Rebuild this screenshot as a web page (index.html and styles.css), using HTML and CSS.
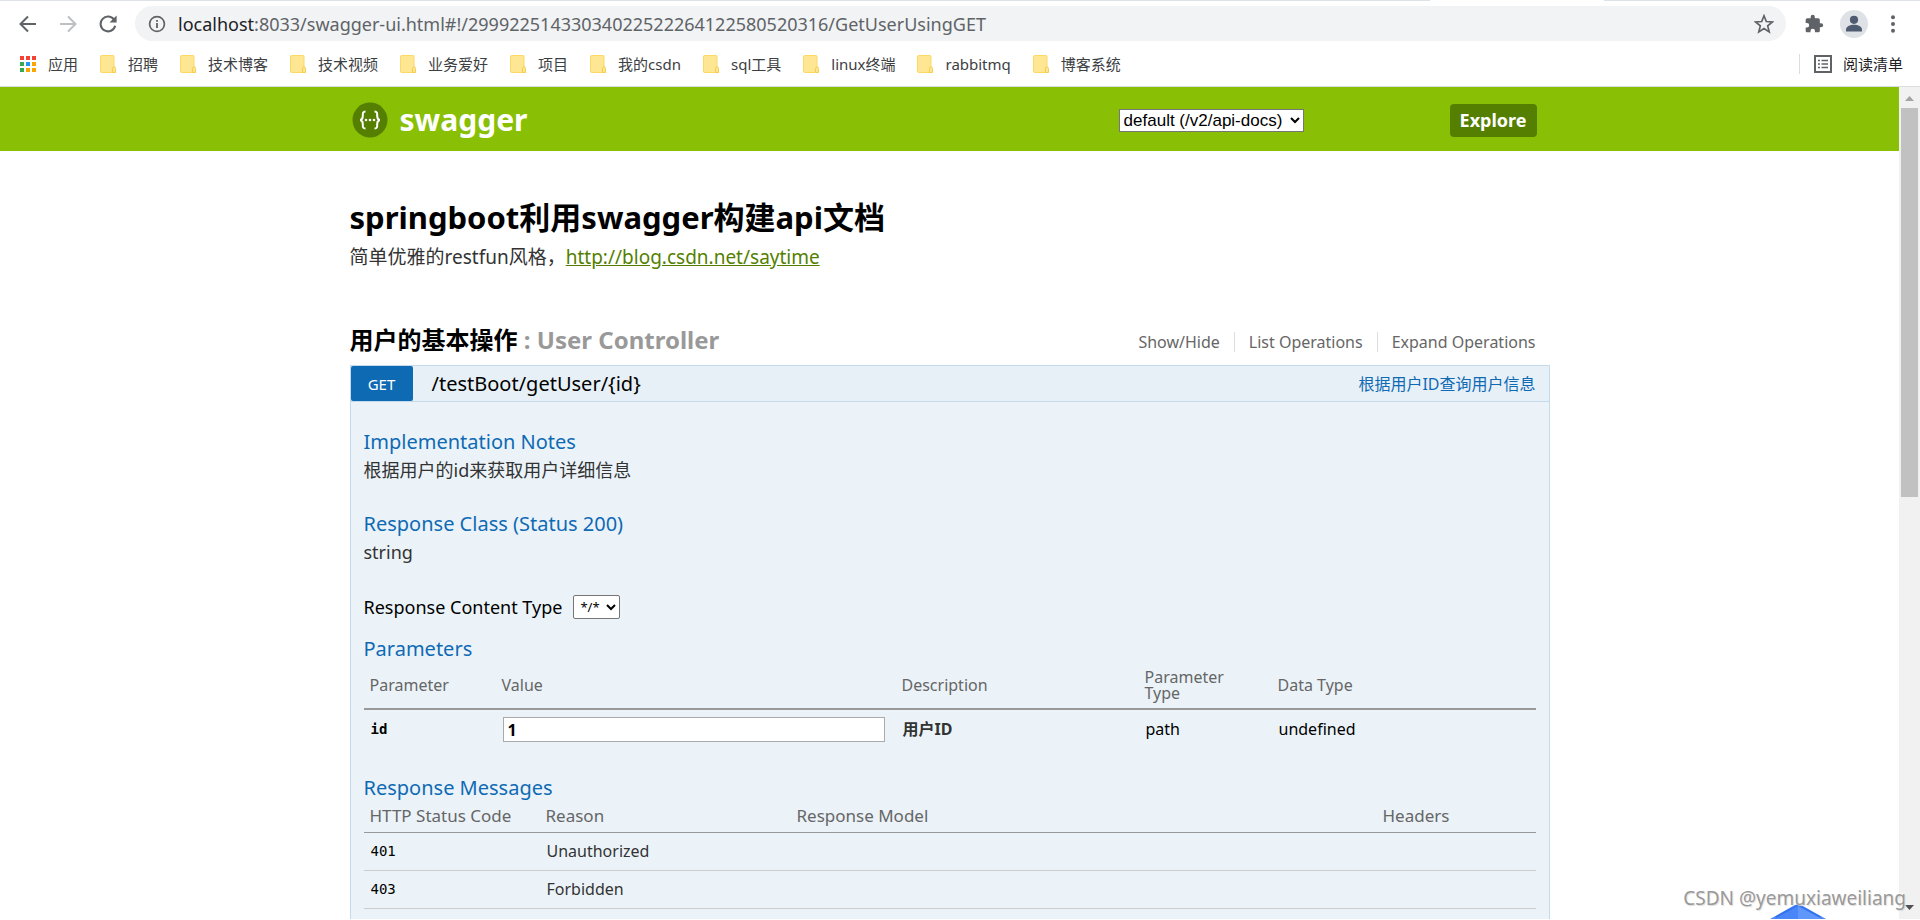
FILE: index.html
```html
<!DOCTYPE html>
<html lang="zh-CN">
<head>
<meta charset="utf-8">
<title>Swagger UI</title>
<link rel="stylesheet" href="styles.css">
</head>
<body>
<svg class="sprite" aria-hidden="true">
  <symbol id="folder" viewBox="0 0 16 18">
    <rect x="0.5" y="0.5" width="13.5" height="17" rx="1" fill="#ffe693" stroke="#fbd964"/>
    <path d="M12.500 17.500V13.500Q12.500 12 14 12Q15.500 12 15.500 13.500V17.500Z" fill="#ffe693" stroke="#f5cd50"/>
  </symbol>
</svg>
<div class="window">
  <div class="tabstrip"><span class="tab-rest tab-left"></span><span class="tab-rest tab-right"></span></div>
  <header class="toolbar">
    <button class="tool back" aria-label="后退"><svg viewBox="0 0 18 18"><path d="M17 9H2M9 1.500L1.500 9L9 16.500" fill="none" stroke="#5f6368" stroke-width="2"/></svg></button>
    <button class="tool forward" aria-label="前进"><svg viewBox="0 0 18 18"><path d="M1 9H16M9 1.500L16.500 9L9 16.500" fill="none" stroke="#bdc0c3" stroke-width="2"/></svg></button>
    <button class="tool reload" aria-label="重新加载"><svg viewBox="0 0 18 18"><path d="M15.300 5A7.400 7.400 0 1 0 16.200 10.800" fill="none" stroke="#5f6368" stroke-width="2.100"/><path d="M17.600 0.500V7.600H10.500Z" fill="#5f6368"/></svg></button>
    <div class="address">
      <svg class="info" viewBox="0 0 18 18"><circle cx="9" cy="9" r="7.400" fill="none" stroke="#5f6368" stroke-width="1.700"/><path d="M9 8v5M9 5v1.800" stroke="#5f6368" stroke-width="1.800"/></svg>
      <div class="url"><span class="host">localhost</span>:8033/swagger-ui.html#!/29992251433034022522264122580520316/GetUserUsingGET</div>
      <button class="star" aria-label="收藏"><svg viewBox="0 0 20 20"><path d="M10 1.800L12.300 7.500L18.400 7.900L13.700 11.900L15.200 17.900L10 14.600L4.800 17.900L6.300 11.900L1.600 7.900L7.700 7.500Z" fill="none" stroke="#5f6368" stroke-width="1.700"/></svg></button>
    </div>
    <button class="ext" aria-label="扩展程序"><svg viewBox="0 0 24 24"><path d="M20.500 11H19V7c0-1.100-.9-2-2-2h-4V3.500a2.500 2.500 0 0 0-5 0V5H4c-1.100 0-2 .9-2 2v3.800h1.500a2.700 2.700 0 0 1 0 5.400H2V20c0 1.100.9 2 2 2h3.800v-1.500a2.700 2.700 0 0 1 5.400 0V22H17c1.100 0 2-.9 2-2v-4h1.500a2.500 2.500 0 0 0 0-5z" fill="#5f6368"/></svg></button>
    <button class="profile" aria-label="用户"><svg viewBox="0 0 28 28"><circle cx="14" cy="14" r="14" fill="#dee1e6"/><circle cx="14" cy="9.800" r="4.100" fill="#4f5b70"/><path d="M6 21.500V19.500C6 16.500 10 14.800 14 14.800S22 16.500 22 19.500V21.500Z" fill="#4f5b70"/></svg></button>
    <button class="menu" aria-label="菜单"><svg viewBox="0 0 4 18"><circle cx="2" cy="2.200" r="2" fill="#5f6368"/><circle cx="2" cy="9" r="2" fill="#5f6368"/><circle cx="2" cy="15.800" r="2" fill="#5f6368"/></svg></button>
  </header>
  <nav class="bookmarks">
    <a class="bookmark" href="#"><svg viewBox="0 0 16 18"><path d="M0 1h4v4H0zM6 1h4v4H6zM12 1h4v4h-4z" fill="#f44336"/><path d="M0 7h4v4H0zM0 13h4v4H0z" fill="#34a853"/><path d="M6 7h4v4H6z" fill="#2196f3"/><path d="M12 7h4v4h-4zM6 13h4v4H6zM12 13h4v4h-4z" fill="#fba500"/></svg>应用</a>
    <a class="bookmark" href="#"><svg><use href="#folder"/></svg>招聘</a>
    <a class="bookmark" href="#"><svg><use href="#folder"/></svg>技术博客</a>
    <a class="bookmark" href="#"><svg><use href="#folder"/></svg>技术视频</a>
    <a class="bookmark" href="#"><svg><use href="#folder"/></svg>业务爱好</a>
    <a class="bookmark" href="#"><svg><use href="#folder"/></svg>项目</a>
    <a class="bookmark" href="#"><svg><use href="#folder"/></svg>我的csdn</a>
    <a class="bookmark" href="#"><svg><use href="#folder"/></svg>sql工具</a>
    <a class="bookmark" href="#"><svg><use href="#folder"/></svg>linux终端</a>
    <a class="bookmark" href="#"><svg><use href="#folder"/></svg>rabbitmq</a>
    <a class="bookmark" href="#"><svg><use href="#folder"/></svg>博客系统</a>
    <button class="reading"><svg viewBox="0 0 18 18"><rect x="1" y="1" width="16" height="16" fill="none" stroke="#5f6368" stroke-width="2"/><path d="M4 5.500h2M4 9h2M4 12.500h2M7.500 5.500H14M7.500 9H14M7.500 12.500H14" stroke="#5f6368" stroke-width="1.600"/></svg>阅读清单</button>
  </nav>
  <div class="viewport">
    <main class="page">
      <div class="banner">
        <div class="wrap banner-row">
          <a class="logo" href="#"><svg viewBox="0 0 36 36"><circle cx="18" cy="18" r="17.500" fill="#547f00"/><path d="M13.500 9.500C10.500 9.500 10.800 11.500 10.800 14S10.500 17.600 8.200 18C10.500 18.400 10.800 19.500 10.800 22S10.500 26.500 13.500 26.500M22.500 9.500C25.500 9.500 25.200 11.500 25.200 14S25.500 17.600 27.800 18C25.500 18.400 25.200 19.500 25.200 22S25.500 26.500 22.500 26.500" fill="none" stroke="#fff" stroke-width="2"/><g fill="#fff"><circle cx="14" cy="18" r="1.300"/><circle cx="18" cy="18" r="1.300"/><circle cx="22" cy="18" r="1.300"/></g></svg>swagger</a>
          <form class="picker">
            <select class="api-select" aria-label="API"><option>default (/v2/api-docs)</option></select>
            <button class="explore" type="button">Explore</button>
          </form>
        </div>
      </div>
      <div class="wrap content">
        <h1 class="title">springboot利用swagger构建api文档</h1>
        <p class="subtitle">简单优雅的restfun风格，<a href="http://blog.csdn.net/saytime">http://blog.csdn.net/saytime</a></p>
        <div class="resource">
          <h2 class="resource-name">用户的基本操作 <span>: User Controller</span></h2>
          <div class="options"><a href="#">Show/Hide</a><a href="#">List Operations</a><a href="#">Expand Operations</a></div>
        </div>
        <section class="operation">
          <div class="op-head">
            <a class="method" href="#">GET</a>
            <a class="path" href="#">/testBoot/getUser/{id}</a>
            <a class="summary" href="#">根据用户ID查询用户信息</a>
          </div>
          <div class="op-body">
            <h3 class="op-title">Implementation Notes</h3>
            <p class="notes">根据用户的id来获取用户详细信息</p>
            <h3 class="op-title">Response Class (Status 200)</h3>
            <p class="notes">string</p>
            <div class="content-type"><label for="ctype">Response Content Type</label><select id="ctype" class="type-select"><option>*/*</option></select></div>
            <h3 class="op-title">Parameters</h3>
            <table class="grid params">
              <colgroup><col class="c-name"><col class="c-value"><col class="c-desc"><col class="c-kind"><col></colgroup>
              <thead><tr><th>Parameter</th><th>Value</th><th>Description</th><th>Parameter Type</th><th>Data Type</th></tr></thead>
              <tbody><tr><td class="code strong"><label for="pid">id</label></td><td class="field"><input id="pid" class="value" type="text" value="1"></td><td class="desc">用户ID</td><td>path</td><td>undefined</td></tr></tbody>
            </table>
            <h3 class="op-title">Response Messages</h3>
            <table class="grid messages">
              <colgroup><col class="c-status"><col class="c-reason"><col class="c-model"><col></colgroup>
              <thead><tr><th>HTTP Status Code</th><th>Reason</th><th>Response Model</th><th>Headers</th></tr></thead>
              <tbody>
                <tr><td class="code">401</td><td>Unauthorized</td><td></td><td></td></tr>
                <tr><td class="code">403</td><td>Forbidden</td><td></td><td></td></tr>
              </tbody>
            </table>
          </div>
        </section>
      </div>
    </main>
    <div class="scrollbar" aria-hidden="true"><span class="arrow up"></span><span class="thumb"></span><span class="arrow down"></span></div>
  </div>
  <svg class="gem" viewBox="0 0 56 15" aria-hidden="true"><path d="M0 15L24 1.500Q28 -.5 32 1.500L56 15Z" fill="#4a86f7"/><path d="M28 1L50 13V15H28Z" fill="#5f97fa"/><path d="M6 13L28 1L50 13" fill="none" stroke="#3270ee" stroke-width="1.500"/></svg>
  <div class="watermark">CSDN @yemuxiaweiliang</div>
</div>
</body>
</html>
```
FILE: styles.css
```css
* { box-sizing: border-box; }
body { margin: 0; background: #fff; font-family: "Noto Sans", "Noto Sans CJK SC", sans-serif; color: #000; }
h1, h2, h3, p { margin: 0; }
a { color: inherit; text-decoration: none; }
button { border: 0; padding: 0; background: none; font: inherit; color: inherit; display: flex; align-items: center; }
.sprite { position: absolute; width: 0; height: 0; }
.window { position: relative; height: 100vh; overflow: hidden; display: flex; flex-direction: column; padding-bottom: 1px; }

/* browser chrome */
.tabstrip { display: flex; justify-content: space-between; height: 1px; }
.tab-rest { background: #dee1e6; }
.tab-left { flex: 1; margin-right: 174px; }
.tab-right { width: 316px; }
.toolbar { display: flex; align-items: center; height: 45px; padding: 0 25px 0 19px; }
.tool svg { width: 18px; height: 18px; }
.tool { width: 40px; }
.reload { width: 36px; }
.address { flex: 1; display: flex; align-items: center; height: 35px; border-radius: 18px; background: #f1f3f4; padding: 0 12px 0 13px; }
.info { width: 18px; height: 18px; margin-right: 12px; }
.url { flex: 1; font-size: 18px; line-height: 24px; color: #5f6368; white-space: nowrap; }
.host { color: #202124; }
.star svg { width: 20px; height: 20px; }
.ext { margin-left: 18px; }
.ext svg { width: 20px; height: 20px; }
.profile { margin-left: 16px; }
.profile svg { width: 28px; height: 28px; }
.menu { margin-left: 23px; }
.menu svg { width: 4px; height: 18px; }
.bookmarks { display: flex; align-items: center; gap: 22px; height: 41px; padding: 0 17px 5px 20px; border-bottom: 1px solid #dadce0; font-size: 15px; line-height: 20px; color: #3c4043; white-space: nowrap; flex: none; }
.bookmark { display: flex; align-items: center; gap: 12px; }
.bookmark svg { width: 16px; height: 18px; }
.reading { margin-left: auto; gap: 11px; height: 20px; padding-left: 14px; border-left: 1px solid #dadce0; color: #202124; }
.reading svg { width: 18px; height: 18px; }

/* page */
.viewport { flex: 1; min-height: 0; display: flex; }
.page { flex: 1; min-width: 0; overflow: hidden; display: flex; flex-direction: column; }
.wrap { width: 100%; max-width: 1200px; margin: 0 auto; }
.banner { background: #89bf04; flex: none; }
.banner-row { display: flex; align-items: center; justify-content: space-between; height: 64px; padding: 2px 13px 0 2px; }
.logo { display: flex; align-items: center; gap: 12px; font-size: 30px; font-weight: 700; line-height: 40px; color: #fff; }
.logo svg { width: 36px; height: 36px; }
.picker { display: flex; align-items: center; gap: 146px; }
.api-select { width: 185px; height: 23px; padding: 0; border: 1px solid #767676; background: #fff; color: #000; font: 17px "Liberation Sans", Arial, sans-serif; }
.explore { height: 33px; padding: 0 10px; border-radius: 4px; background: #547f00; color: #fff; font-size: 18px; font-weight: 700; }
.content { flex: 1; display: flex; flex-direction: column; }
.title { margin-top: 44px; font-size: 31px; line-height: 44px; font-weight: 700; }
.subtitle { margin-top: 4px; font-size: 19px; line-height: 28px; color: #333; }
.subtitle a { color: #547f00; text-decoration: underline; }
.resource { display: flex; justify-content: space-between; align-items: center; margin-top: 53px; height: 32px; padding-right: 14px; }
.resource-name { font-size: 24px; line-height: 32px; }
.resource-name span { color: #999; }
.options { display: flex; padding-top: 4px; font-size: 16px; line-height: 20px; color: #666; }
.options a + a { margin-left: 14px; padding-left: 14px; border-left: 1px solid #ddd; }
.operation { margin-top: 9px; flex: 1; display: flex; flex-direction: column; border: 1px solid #c3d9ec; border-bottom: 0; background: #ebf3f9; }
.op-head { display: flex; align-items: center; height: 36px; background: #e7f0f7; border-bottom: 1px solid #c3d9ec; padding-right: 13px; }
.method { width: 62px; height: 35px; border-radius: 2px; background: #0f6ab4; color: #fff; font-size: 15px; line-height: 37px; text-align: center; }
.path { margin-left: 19px; font-size: 20px; line-height: 28px; }
.summary { margin-left: auto; font-size: 16px; line-height: 24px; color: #0f6ab4; }
.op-body { flex: 1; padding: 27px 13px 0 13px; }
.op-title { font-size: 20px; font-weight: 400; line-height: 26px; color: #0f6ab4; }
.notes { font-size: 18px; line-height: 30px; margin-bottom: 26px; color: #333; }
.content-type { display: flex; align-items: center; gap: 11px; height: 28px; margin-bottom: 15px; font-size: 18px; line-height: 26px; }
.type-select { width: 47px; height: 24px; padding: 0 0 0 2px; border: 1px solid #767676; border-radius: 2px; background: #fff; color: #000; font: 13px "Noto Sans", sans-serif; }
.grid { width: 100%; table-layout: fixed; border-collapse: collapse; }
.grid th { padding: 0 6px; text-align: left; font-size: 16px; font-weight: 400; color: #666; line-height: 16px; }
.grid td { padding: 0 7px; font-size: 16px; line-height: 20px; }
.params { margin-bottom: 27px; }
.params th { height: 47px; padding-right: 40px; border-bottom: 2px solid #999; }
.params td { height: 39px; }
.grid .field { padding: 7px 11px 0 7px; vertical-align: top; }
.c-name { width: 132px; }
.c-kind { width: 133px; }
.c-value { width: 400px; }
.c-desc { width: 243px; }
.c-status { width: 176px; }
.c-reason { width: 251px; }
.c-model { width: 586px; }
.value { display: block; width: 100%; height: 25px; padding: 0 4px; border: 1px solid #aaa; background: #fff; font: 700 16px "Noto Sans", sans-serif; color: #000; }
.grid .desc { font-weight: 700; color: #333; }
.grid .code { font-family: "DejaVu Sans Mono", monospace; font-size: 14px; }
.grid .strong { font-weight: 700; }
.messages th { height: 31px; border-bottom: 1px solid #999; font-size: 17px; }
.messages td { height: 38px; border-bottom: 1px solid #ccc; color: #333; }
.messages .code { color: #000; }

/* scrollbar and overlays */
.scrollbar { width: 21px; padding: 0 2px; background: #f1f1f1; display: flex; flex-direction: column; align-items: center; }
.arrow { width: 9px; height: 5px; flex: none; }
.up { margin: 9px 0 7px; background: #a3a3a3; clip-path: polygon(50% 0, 100% 100%, 0 100%); }
.down { margin: auto 0 9px; background: #505050; clip-path: polygon(0 0, 100% 0, 50% 100%); }
.thumb { width: 17px; height: 389px; background: #c1c1c1; }
.gem { position: absolute; right: 94px; bottom: 1px; width: 56px; height: 15px; }
.watermark { position: absolute; right: 14px; bottom: 8px; font-size: 19px; line-height: 28px; color: #999; text-shadow: -1px -1px 0 #fff, 1px 1px 1px #ddd; }
```
